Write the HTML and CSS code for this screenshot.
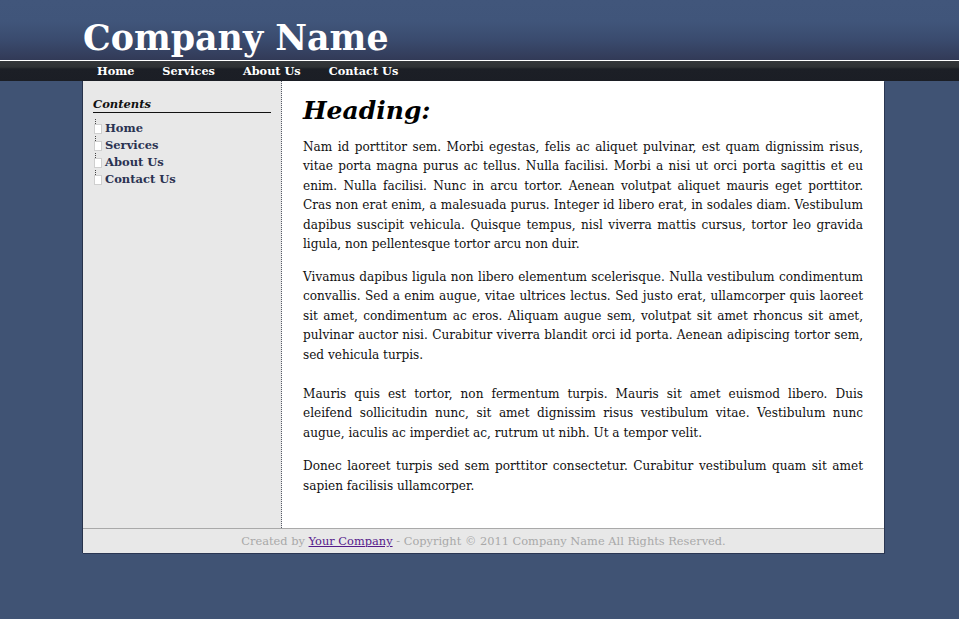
FILE: index.html
```html
<!DOCTYPE html>
<html>
<head>
<meta charset="utf-8">
<title>Company Name</title>
<link rel="stylesheet" href="styles.css">
</head>
<body>
<div class="header">
  <div class="wrap">
    <div class="logo">Company Name</div>
  </div>
</div>
<div class="nav">
  <div class="wrap">
    <a href="#">Home</a><a href="#">Services</a><a href="#">About Us</a><a href="#">Contact Us</a>
  </div>
</div>
<div class="page">
  <div class="main">
    <div class="sidebar">
      <div class="side-title">Contents</div>
      <ul class="side-list">
        <li>Home</li>
        <li>Services</li>
        <li>About Us</li>
        <li>Contact Us</li>
      </ul>
    </div>
    <div class="content">
      <h1 class="heading">Heading:</h1>
      <p class="p1">Nam id porttitor sem. Morbi egestas, felis ac aliquet pulvinar, est quam dignissim risus, vitae porta magna purus ac tellus. Nulla facilisi. Morbi a nisi ut orci porta sagittis et eu enim. Nulla facilisi. Nunc in arcu tortor. Aenean volutpat aliquet mauris eget porttitor. Cras non erat enim, a malesuada purus. Integer id libero erat, in sodales diam. Vestibulum dapibus suscipit vehicula. Quisque tempus, nisl viverra mattis cursus, tortor leo gravida ligula, non pellentesque tortor arcu non duir.</p>
      <p class="p2">Vivamus dapibus ligula non libero elementum scelerisque. Nulla vestibulum condimentum convallis. Sed a enim augue, vitae ultrices lectus. Sed justo erat, ullamcorper quis laoreet sit amet, condimentum ac eros. Aliquam augue sem, volutpat sit amet rhoncus sit amet, pulvinar auctor nisi. Curabitur viverra blandit orci id porta. Aenean adipiscing tortor sem, sed vehicula turpis.</p>
      <p class="p3">Mauris quis est tortor, non fermentum turpis. Mauris sit amet euismod libero. Duis eleifend sollicitudin nunc, sit amet dignissim risus vestibulum vitae. Vestibulum nunc augue, iaculis ac imperdiet ac, rutrum ut nibh. Ut a tempor velit.</p>
      <p class="p4">Donec laoreet turpis sed sem porttitor consectetur. Curabitur vestibulum quam sit amet sapien facilisis ullamcorper.</p>
    </div>
  </div>
  <div class="footer">Created by <a href="#">Your Company</a> - Copyright &copy; 2011 Company Name All Rights Reserved.</div>
</div>
</body>
</html>
```
FILE: styles.css
```css
html, body {
  margin: 0;
  padding: 0;
}
body {
  background: #405374;
  font-family: "DejaVu Serif", serif;
  min-height: 619px;
}
.wrap {
  width: 802px;
  margin-left: 82px;
}
.header {
  height: 60px;
  background: linear-gradient(to bottom, #41567b 0px, #40557a 22px, #3a4b6e 40px, #323a57 60px);
  border-bottom: 1px solid #ffffff;
}
.logo {
  padding: 18px 0 0 1px;
  font-family: "DejaVu Serif", serif;
  font-weight: bold;
  font-size: 34.8px;
  line-height: 40px;
  color: #ffffff;
}
.nav {
  height: 20px;
  background: linear-gradient(to bottom, #34373a 0px, #2e3134 6px, #25282c 7px, #1c1f26 8px, #1b1e25 20px);
}
.nav .wrap {
  display: flex;
  padding-left: 1px;
}
.nav a {
  display: block;
  padding: 1px 14px 0 14px;
  font-family: "DejaVu Serif", serif;
  font-weight: bold;
  font-size: 11.3px;
  line-height: 19px;
  color: #ffffff;
  text-decoration: none;
}
.page {
  width: 801px;
  margin-left: 82px;
  border-left: 1px solid #27324b;
  box-shadow: 1px 1px 0 #2a3652;
}
.main {
  display: flex;
  height: 447px;
}
.sidebar {
  width: 178px;
  padding: 16px 10px 0 10px;
  background: #e8e8e8;
  border-right: 1px dotted #555a66;
}
.side-title {
  font-family: "DejaVu Serif", serif;
  font-weight: bold;
  font-style: italic;
  font-size: 11.5px;
  line-height: 15px;
  color: #111111;
  border-bottom: 1px solid #111111;
}
.side-list {
  list-style: none;
  margin: 6px 0 0 0;
  padding: 0;
}
.side-list li {
  display: flex;
  align-items: center;
  height: 17px;
  font-family: "DejaVu Serif", serif;
  font-weight: bold;
  font-size: 11.5px;
  color: #2b3352;
  background: repeating-linear-gradient(to bottom, #444 0 1px, transparent 1px 2px) no-repeat 2px 0 / 1px 5px;
}
.side-list li::before {
  content: "";
  width: 6px;
  height: 8px;
  margin: 3px 3px 0 1px;
  background: #ffffff;
  border: 1px solid #cfcfcf;
}
.content {
  flex: 1;
  background: #ffffff;
  padding: 14px 21px 0 21px;
}
.heading {
  margin: 0;
  font-family: "DejaVu Serif", serif;
  font-weight: bold;
  font-style: italic;
  font-size: 25px;
  line-height: 32px;
  color: #000000;
}
.content p {
  margin: 0;
  font-family: "DejaVu Serif", serif;
  font-size: 12.1px;
  line-height: 19.4px;
  color: #111111;
  text-align: justify;
}
.content .p1 { margin-top: 11px; }
.content .p2 { margin-top: 13.6px; }
.content .p3 { margin-top: 20px; }
.content .p4 { margin-top: 14px; }
.footer {
  height: 24px;
  border-top: 1px solid #a9a9a9;
  background: #e8e8e8;
  text-align: center;
  font-family: "DejaVu Serif", serif;
  font-size: 11.4px;
  line-height: 25px;
  color: #a8a8a8;
}
.footer a {
  color: #551a8b;
  text-decoration: underline;
}
```
